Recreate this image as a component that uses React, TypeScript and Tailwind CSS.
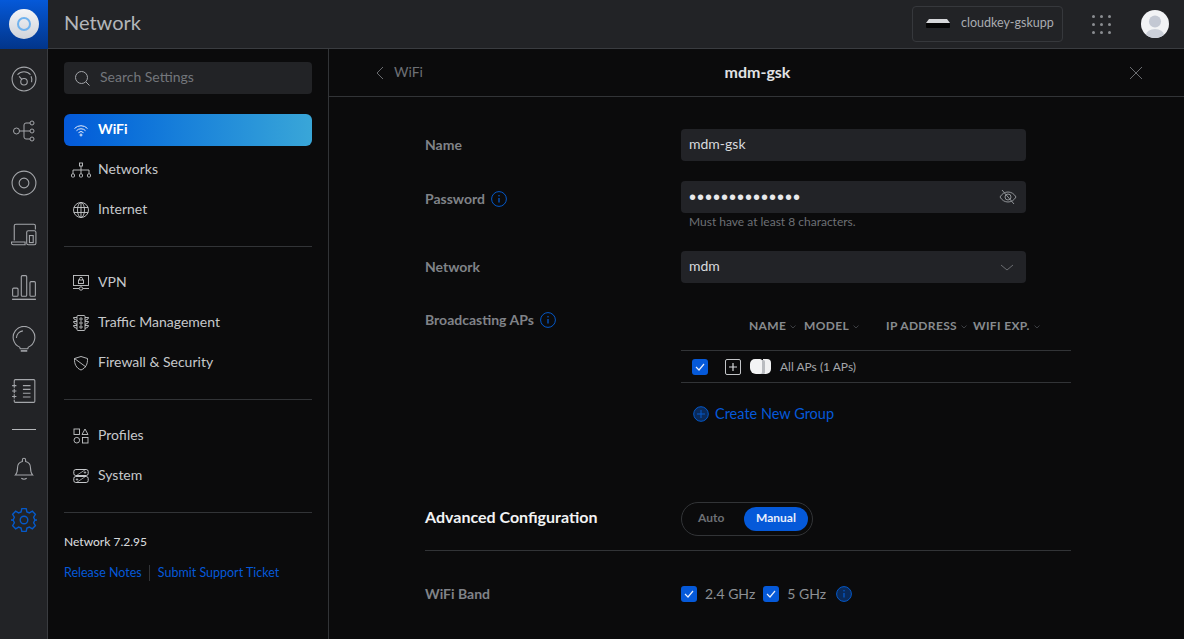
import React from "react";

const S = ({ size = 24, children, className = "" }: { size?: number; children: React.ReactNode; className?: string }) => (
  <svg width={size} height={size} viewBox="0 0 24 24" fill="none" stroke="currentColor" strokeWidth={1} className={className}>
    {children}
  </svg>
);

const Info = ({ fill = "none" }: { fill?: string }) => (
  <svg width="16" height="16" viewBox="0 0 16 16" fill="none" className="text-[#0559c9]">
    <circle cx="8" cy="8" r="7.400" stroke="currentColor" fill={fill} />
    <path d="M8 7v4.500" stroke="currentColor" strokeWidth="1.300" />
    <circle cx="8" cy="4.800" r=".8" fill="currentColor" />
  </svg>
);

const Check = () => (
  <span className="w-4 h-4 rounded-[3px] bg-[#0559d9] flex items-center justify-center shrink-0">
    <svg width="10" height="8" viewBox="0 0 10 8" fill="none">
      <path d="M1 4l3 3 5-6" stroke="#e8eefc" strokeWidth="1.200" />
    </svg>
  </span>
);

const Caret = () => (
  <svg width="6" height="4" viewBox="0 0 6 4" fill="none" className="text-[#3c3e42] ml-1 mt-[2px]">
    <path d="M.5.5L3 3 5.500.5" stroke="currentColor" />
  </svg>
);

const railTop = [
  <S key="a" size={26}><circle cx="12" cy="12" r="11" /><path d="M6 8a8 8 0 0 1 12 0M18.500 9.500A8 8 0 0 1 19 15" /><circle cx="12" cy="14.500" r="3" /><path d="M10 12.300L7.500 9.500" /></S>,
  <S key="b" size={24}><circle cx="4.500" cy="12" r="3" /><path d="M7.500 12H12M18 4h-4a2 2 0 0 0-2 2v12a2 2 0 0 0 2 2h4M12 12h6" /><circle cx="20" cy="4" r="2" /><circle cx="20" cy="12" r="2" /><circle cx="20" cy="20" r="2" /></S>,
  <S key="c" size={26}><circle cx="12" cy="12" r="11" /><circle cx="12" cy="12" r="4.500" /></S>,
  <S key="d" size={26}><path d="M3 17V3.500A1.500 1.500 0 0 1 4.500 2H21a1.500 1.500 0 0 1 1.500 1.500V7" /><path d="M.5 18.500h12.500v2.500H2a1.500 1.500 0 0 1-1.500-1.500z" /><rect x="14.500" y="8" width="8.500" height="13" rx="1.500" /><rect x="17" y="12.500" width="3.500" height="6.500" /></S>,
  <S key="e" size={26}><rect x="1.500" y="13" width="5" height="7.500" rx="1" /><rect x="9.500" y="1.500" width="5" height="19" rx="1" /><rect x="17.500" y="7" width="5" height="13.500" rx="1" /><path d="M1 23.500h22" strokeWidth="1.500" /></S>,
  <S key="f" size={26}><path d="M8 19.500a10 10 0 1 1 8 0l-.5 1.500h-7z" /><path d="M5 11a7 7 0 0 1 6-6.500" /><path d="M9 23h6" strokeWidth="1.500" /></S>,
  <S key="g" size={26}><path d="M3 5V2.500A1 1 0 0 1 4 1.500h17a1 1 0 0 1 1 1v19a1 1 0 0 1-1 1H4a1 1 0 0 1-1-1V20" /><path d="M11 7h7M11 10.500h7M11 14h7M11 17.500h7" /><path d="M1 7h4M1 12h4M1 17h4" /><path d="M3 5v4M3 10v4M3 15v4" /></S>,
];

const navIcon: Record<string, React.ReactNode> = {
  WiFi: <svg width="16" height="16" viewBox="0 0 16 16" fill="none" stroke="#e8eefc"><path d="M1.500 6.500a9 9 0 0 1 13 0M3.500 8.700a6.200 6.200 0 0 1 9 0M5.500 10.700a3.500 3.500 0 0 1 5 0" /><circle cx="8" cy="13" r="1" /></svg>,
  Networks: <svg width="20" height="16" viewBox="0 0 20 16" fill="none" stroke="currentColor" strokeWidth=".9"><rect x="8.500" y="1" width="3" height="3" /><rect x=".5" y="12" width="3" height="3" rx=".8" /><rect x="8.500" y="12" width="3" height="3" rx=".8" /><rect x="16.500" y="12" width="3" height="3" rx=".8" /><path d="M10 4v8M2 12V8h16v4" /></svg>,
  Internet: <svg width="16" height="16" viewBox="0 0 16 16" fill="none" stroke="currentColor" strokeWidth=".9"><circle cx="8" cy="8" r="7.500" /><ellipse cx="8" cy="8" rx="3.500" ry="7.500" /><path d="M8 .5v15M.8 5.500h14.400M.8 10.500h14.400" /></svg>,
  VPN: <svg width="16" height="16" viewBox="0 0 16 16" fill="none" stroke="currentColor" strokeWidth=".9"><rect x=".5" y=".5" width="15" height="10" /><rect x="5.500" y="5" width="5" height="3.500" /><path d="M6.500 5V3.800a1.500 1.500 0 0 1 3 0V5M0 13.500h6M10 13.500h6" /><circle cx="8" cy="13.500" r="1.700" /></svg>,
  "Traffic Management": <svg width="16" height="16" viewBox="0 0 16 16" fill="none" stroke="currentColor" strokeWidth=".9"><rect x="4" y=".5" width="8" height="15" rx="1" /><circle cx="8" cy="4" r="1.200" /><circle cx="8" cy="8" r="1.200" /><circle cx="8" cy="12" r="1.200" /><path d="M4 2.500H.5L1 4l3 1.500M4 6.500H.5L1 8l3 1.500M4 10.500H.5L1 12l3 1.500M12 2.500h3.500L15 4l-3 1.500M12 6.500h3.500L15 8l-3 1.500M12 10.500h3.500L15 12l-3 1.500" /></svg>,
  "Firewall & Security": <svg width="16" height="16" viewBox="0 0 16 16" fill="none" stroke="currentColor" strokeWidth=".9"><path d="M1.500 3.500L8 1.500l6.500 2c.3 5.500-1.800 9.700-6.500 11.500C3.300 13.200 1.200 9 1.500 3.500z" /><path d="M1.500 3.500L13 12" /></svg>,
  Profiles: <svg width="16" height="16" viewBox="0 0 16 16" fill="none" stroke="currentColor" strokeWidth=".9"><rect x="1" y="1" width="5.500" height="5.500" /><path d="M12 1l3 5.500H9z" /><circle cx="3.800" cy="12.200" r="2.800" /><rect x="9.500" y="9.500" width="5.500" height="5.500" /></svg>,
  System: <svg width="16" height="16" viewBox="0 0 16 16" fill="none" stroke="currentColor"><rect x=".8" y="1.500" width="14.400" height="6" rx="2" /><rect x=".8" y="8.500" width="14.400" height="6" rx="2" /><path d="M3.500 7.500l9-6M3.500 14.500l9-6" strokeWidth=".7" /><circle cx="12" cy="4.500" r=".7" /><circle cx="4" cy="11.500" r=".7" /></svg>,
};

const NavItem = ({ label, active = false }: { label: string; active?: boolean }) => (
  <div
    className={
      "h-8 rounded-[6px] flex items-center text-[14px] pl-[7px] " +
      (active
        ? "font-bold text-white bg-gradient-to-r from-[#0559d9] to-[#39a6d8]"
        : "text-[#c6c8cb]")
    }
  >
    <span className="w-[20px] flex justify-center mr-[7px] shrink-0 text-[#c6c8cb]">
      {navIcon[label]}
    </span>
    <span className="pb-[2px]">{label}</span>
  </div>
);

const Rule = ({ className = "" }: { className?: string }) => <div className={"h-px bg-[#323437] " + className} />;

const Field = ({ children }: { children: React.ReactNode }) => (
  <div className="h-8 w-[345px] rounded-[4px] bg-[#222327] flex items-center justify-between pl-2 pr-[10px] text-[14px] text-[#d8dadd]">
    {children}
  </div>
);

const Label = ({ children, className = "" }: { children: React.ReactNode; className?: string }) => (
  <div className={"w-[256px] shrink-0 flex items-center gap-[6px] text-[14px] font-bold text-[#808388] " + className}>{children}</div>
);

export default function App() {
  return (
    <div className="w-[1184px] h-[639px] overflow-hidden flex flex-col bg-[#0b0b0c] font-['Lato',sans-serif] leading-none">
      {/* top bar */}
      <header className="h-[49px] shrink-0 flex items-center bg-[#222326] border-b border-[#3a3c40]">
        <div className="w-[48px] h-[49px] shrink-0 bg-gradient-to-b from-[#0559d9] to-[#02358a] flex items-center justify-center">
          <div className="w-[30px] h-[30px] rounded-full bg-gradient-to-b from-[#f4f5f7] to-[#cfd3da] flex items-center justify-center">
            <div className="w-[14px] h-[14px] rounded-full border-2 border-[#6fb2ee]" />
          </div>
        </div>
        <div className="ml-4 text-[20px] text-[#b3b6ba] pb-[4px]">Network</div>
        <div className="ml-auto h-[36px] w-[151px] rounded-[4px] border border-[#36383c] flex items-center pl-[12px]">
          <svg width="26" height="12" viewBox="0 0 26 12">
            <path d="M4 1h18l3 4H1z" fill="#d5d6d9" />
            <path d="M1 5h24v4a1 1 0 0 1-1 1H2a1 1 0 0 1-1-1z" fill="#050505" />
          </svg>
          <span className="ml-[10px] text-[12.500px] text-[#a9acb1] pb-[2px]">cloudkey-gskupp</span>
        </div>
        <div className="ml-[29px] grid grid-cols-3 gap-x-[5px] gap-y-[5px]">
          {Array.from({ length: 9 }).map((_, i) => (
            <span key={i} className="w-[3px] h-[3px] rounded-full bg-[#8b8d91]" />
          ))}
        </div>
        <div className="ml-[30px] mr-[15px] w-[28px] h-[28px] rounded-full bg-[#f2f3f5] overflow-hidden shrink-0">
          <svg width="28" height="28" viewBox="0 0 28 28">
            <circle cx="14" cy="11.500" r="6" fill="#c3c8d3" />
            <ellipse cx="14" cy="25" rx="9" ry="6" fill="#ccd0d9" />
          </svg>
        </div>
      </header>

      <div className="flex-1 flex min-h-0">
        {/* rail */}
        <nav className="w-[48px] shrink-0 bg-[#222326] border-r border-[#3a3c40] flex flex-col items-center text-[#a4a6aa] pt-[4px]">
          {railTop.map((icon, i) => (
            <div key={i} className="h-[52px] w-full flex items-center justify-center">{icon}</div>
          ))}
          <div className="w-6 h-px bg-[#b5b7ba] mt-[12px]" />
          <div className="h-[52px] mt-[12px] flex items-center justify-center">
            <S size={26}>
              <path d="M4 18.500c1.500-1.500 2-3 2-6.500a6 6 0 0 1 4.500-6V4.500a1.500 1.500 0 0 1 3 0V6A6 6 0 0 1 18 12c0 3.500.5 5 2 6.500z" />
              <path d="M9.500 21.500c1.500 1 3.500 1 5 0" />
            </S>
          </div>
          <div className="h-[52px] flex items-center justify-center text-[#0559c9]">
            <S size={26}>
              <path strokeWidth="1.300" d="M10 1.500h4l.7 3 2.300 1 2.700-1.600 2.800 2.800L20.900 9.400l1 2.300 2 .3v0l-2 .3-1 2.300 1.600 2.700-2.800 2.800-2.700-1.600-2.300 1-.7 3h-4l-.7-3-2.300-1-2.700 1.600-2.800-2.800 1.600-2.700-1-2.300-2-.3v0l2-.3 1-2.300-1.600-2.700 2.800-2.800L7 5.500l2.300-1z" />
              <circle cx="12" cy="12" r="3.500" strokeWidth="1.300" />
            </S>
          </div>
        </nav>

        {/* settings */}
        <aside className="w-[281px] shrink-0 border-r border-[#323437] px-4 pt-[13px] bg-[#0b0b0c]">
          <div className="h-8 rounded-[4px] bg-[#222326] flex items-center pl-[10px] text-[14px] text-[#73767b]">
            <svg width="17" height="17" viewBox="0 0 17 17" fill="none" stroke="#a4a6aa" className="mr-[9px]">
              <circle cx="7.500" cy="7.500" r="6" />
              <path d="M12 12l3.500 3.500" />
            </svg>
            <span className="pb-[2px]">Search Settings</span>
          </div>
          <div className="mt-5 flex flex-col gap-2">
            <NavItem label="WiFi" active />
            <NavItem label="Networks" />
            <NavItem label="Internet" />
          </div>
          <Rule className="mt-5" />
          <div className="mt-5 flex flex-col gap-2">
            <NavItem label="VPN" />
            <NavItem label="Traffic Management" />
            <NavItem label="Firewall & Security" />
          </div>
          <Rule className="mt-[20px]" />
          <div className="mt-5 flex flex-col gap-2">
            <NavItem label="Profiles" />
            <NavItem label="System" />
          </div>
          <Rule className="mt-[20px]" />
          <div className="mt-[23px] text-[12px] font-medium text-[#d5d7da]">Network 7.2.95</div>
          <div className="mt-[17px] flex items-center text-[12.500px] text-[#0559d9]">
            <span>Release Notes</span>
            <span className="w-px h-4 bg-[#323437] ml-[7px] mr-2" />
            <span>Submit Support Ticket</span>
          </div>
        </aside>

        {/* main */}
        <main className="flex-1 min-w-0 flex flex-col">
          <div className="h-[48px] shrink-0 border-b border-[#323437] flex items-center pl-[45px] pr-[41px] relative">
            <svg width="10" height="14" viewBox="0 0 10 14" fill="none" stroke="#6a6c70"><path d="M9 1L3 7l6 6" /></svg>
            <span className="ml-[10px] text-[14px] text-[#6d7075] pb-[2px]">WiFi</span>
            <span className="absolute left-0 right-[-2px] text-center text-[16px] font-bold text-[#e0e2e4] pb-[2px]">mdm-gsk</span>
            <svg className="ml-auto" width="14" height="14" viewBox="0 0 14 14" fill="none" stroke="#6a6c70"><path d="M1 1l12 12M13 1L1 13" /></svg>
          </div>

          <div className="pl-[96px] pt-[32px] w-[742px]">
            <div className="flex items-center">
              <Label>Name</Label>
              <Field><span className="pb-[2px]">mdm-gsk</span></Field>
            </div>
            <div className="flex items-start mt-5">
              <Label className="h-8 pt-[4px]">Password <Info /></Label>
              <div>
                <Field>
                  <span className="text-[#e8e9eb] text-[20px] tracking-[1px] font-['Liberation_Sans',sans-serif]">{"••••••••••••••"}</span>
                  <svg className="-mr-[1px]" width="18" height="16" viewBox="0 0 18 16" fill="none" stroke="#8f9296">
                    <path d="M1 8c2-3.500 5-5 8-5s6 1.500 8 5c-2 3.500-5 5-8 5s-6-1.500-8-5z" />
                    <circle cx="9" cy="8" r="3" />
                    <path d="M3 1l12 14" />
                  </svg>
                </Field>
                <div className="mt-[3px] pl-2 text-[12px] text-[#6d7075] h-[13px]">Must have at least 8 characters.</div>
              </div>
            </div>
            <div className="flex items-center mt-[22px]">
              <Label>Network</Label>
              <Field>
                <span className="pb-[2px]">mdm</span>
                <svg className="mr-[2px]" width="14" height="7" viewBox="0 0 14 7" fill="none" stroke="#6a6c70"><path d="M1 1l6 5 6-5" /></svg>
              </Field>
            </div>
            <div className="flex items-start mt-[29px]">
              <Label className="h-4">Broadcasting APs <Info /></Label>
              <div className="w-[390px]">
                <div className="h-[39px] pb-[10px] flex items-center text-[12px] font-bold text-[#888b8f] tracking-[0.35px] pl-[68px] border-b border-[#323437]">
                  <span className="w-[55px] flex items-center">NAME<Caret /></span>
                  <span className="w-[82px] flex items-center">MODEL<Caret /></span>
                  <span className="w-[87px] flex items-center">IP ADDRESS<Caret /></span>
                  <span className="flex items-center">WIFI EXP.<Caret /></span>
                </div>
                <div className="h-[32px] flex items-center border-b border-[#323437] pl-[11px]">
                  <Check />
                  <span className="ml-[17px] w-4 h-4 rounded-[2px] border border-[#c4c6c9] flex items-center justify-center text-[#d8dadd]">
                    <svg width="8" height="8" viewBox="0 0 8 8" stroke="currentColor" strokeWidth="1.200"><path d="M4 0v8M0 4h8" /></svg>
                  </span>
                  <svg className="ml-[8px]" width="22" height="17" viewBox="0 0 22 17">
                    <path d="M14 1h4a4 4 0 0 1 4 4v6a5 5 0 0 1-5 5h-3z" fill="#f0f1f2" />
                    <rect x="10" y="2" width="6" height="14" rx="1.500" fill="#b9bcc0" />
                    <path d="M6 1h5a2 2 0 0 1 2 2v11a2 2 0 0 1-2 2H7a6 6 0 0 1-6-6V6a5 5 0 0 1 5-5z" fill="#f3f4f5" />
                  </svg>
                  <span className="ml-[9px] text-[12px] text-[#a4a6aa]">All APs (1 APs)</span>
                </div>
                <div className="mt-[23px] pl-[12px] flex items-center text-[14.500px] text-[#0559d9]">
                  <svg width="16" height="16" viewBox="0 0 16 16" fill="#0a2a5a" stroke="#0559c9" className="mr-[6px]">
                    <circle cx="8" cy="8" r="7.300" />
                    <path d="M8 4v8M4 8h8" />
                  </svg>
                  Create New Group
                </div>
              </div>
            </div>
          </div>

          <div className="ml-[96px] w-[646px] mt-[80px] h-[34px] flex items-center">
            <div className="w-[256px] shrink-0 text-[16px] font-bold text-[#f2f3f4] pb-[4px]">Advanced Configuration</div>
            <div className="w-[132px] h-[34px] rounded-full border border-[#323437] flex items-center pl-[16px] pr-[4px] text-[12px] font-bold">
              <span className="text-[#6d7075] pb-[2px]">Auto</span>
              <span className="ml-auto w-[64px] h-[24px] pb-[2px] rounded-full bg-[#0559d9] text-[#e8eefc] flex items-center justify-center">Manual</span>
            </div>
          </div>
          <Rule className="ml-[96px] w-[646px] mt-[14px]" />
          <div className="ml-[96px] mt-[35px] flex items-center">
            <Label>WiFi Band</Label>
            <Check />
            <span className="ml-2 text-[14px] text-[#8d9094]">2.4 GHz</span>
            <span className="ml-2"><Check /></span>
            <span className="ml-2 text-[14px] text-[#8d9094]">5 GHz</span>
            <span className="ml-[10px]"><Info fill="#0a2a5a" /></span>
          </div>
        </main>
      </div>
    </div>
  );
}
